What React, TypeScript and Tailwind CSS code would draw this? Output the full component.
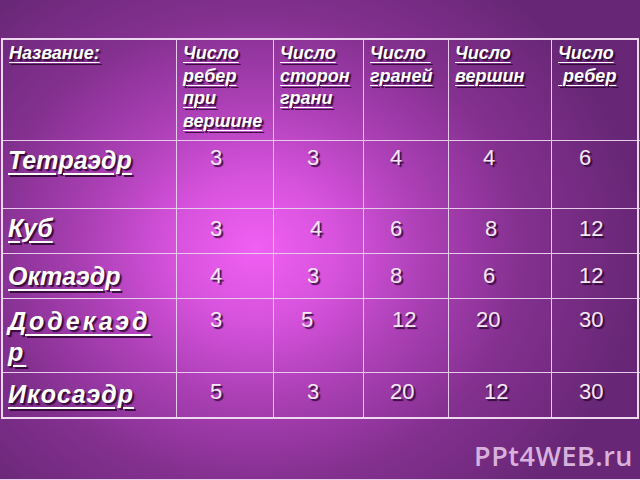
import React from "react";

const FONT = { fontFamily: '"Liberation Sans", Arial, sans-serif' };

const HEADERS: { lines: string[] }[] = [
  { lines: ["Название:"] },
  { lines: ["Число", "ребер", "при", "вершине"] },
  { lines: ["Число", "сторон", "грани"] },
  { lines: ["Число\u00a0", "граней"] },
  { lines: ["Число", "вершин"] },
  { lines: ["Число", "\u00a0ребер"] },
];

interface Row { name: React.ReactNode; nums: string[]; namePt: string; numPt: string; offs: string[]; }

const ROWS: Row[] = [
  { name: "Тетраэдр", nums: ["3", "3", "4", "4", "6"], namePt: "pt-[4px]", numPt: "pt-[4px]", offs: ["pl-[33px]", "pl-[33px]", "pl-[26px]", "pl-[34px]", "pl-[27px]"] },
  { name: "Куб", nums: ["3", "4", "6", "8", "12"], namePt: "pt-[4px]", numPt: "pt-[7px]", offs: ["pl-[33px]", "pl-[36px]", "pl-[26px]", "pl-[36px]", "pl-[27px]"] },
  { name: "Октаэдр", nums: ["4", "3", "8", "6", "12"], namePt: "pt-[7px]", numPt: "pt-[9px]", offs: ["pl-[33px]", "pl-[33px]", "pl-[26px]", "pl-[34px]", "pl-[27px]"] },
  { name: <span className="tracking-[3px]">Додекаэд<br />р</span>, nums: ["3", "5", "12", "20", "30"], namePt: "pt-[7px]", numPt: "pt-[8px]", offs: ["pl-[33px]", "pl-[27px]", "pl-[28px]", "pl-[27px]", "pl-[27px]"] },
  { name: <span className="tracking-[1px]">Икосаэдр</span>, nums: ["5", "3", "20", "12", "30"], namePt: "pt-[6px]", numPt: "pt-[6px]", offs: ["pl-[33px]", "pl-[33px]", "pl-[26px]", "pl-[35px]", "pl-[27px]"] },
];

const SHADOW = "[text-shadow:2px_2px_1px_rgba(40,5,45,0.85)]";

export default function App() {
  return (
    <div
      className="relative w-[640px] h-[480px] overflow-hidden bg-[radial-gradient(ellipse_60%_70%_at_40%_52%,#f060f3_0%,#d652dc_22%,#aa3fb4_45%,#83308f_70%,#682776_100%)] border-b border-[#e9cdee]"
      style={FONT}
    >
      <div className="pt-[38px] pl-px">
        <div className="grid w-[638px] grid-cols-[174px_97px_90px_85px_103px_89px] grid-rows-[101px_68px_45px_45px_74px_44px] border-2 border-[#eed8f0]">
          {HEADERS.map((h, i) => (
            <div
              key={i}
              className={`border-b border-[#e6cbea] ${i < 5 ? "border-r" : ""} pl-[6px] pt-[2px] text-white font-bold italic text-[18px] leading-[22.5px] ${SHADOW}`}
            >
              {h.lines.map((l, j) => (
                <div key={j}><span className="underline decoration-1 underline-offset-[3px]">{l}</span></div>
              ))}
            </div>
          ))}
          {ROWS.map((r, ri) => (
            <React.Fragment key={ri}>
              <div
                className={`border-r border-[#e6cbea] ${ri < 4 ? "border-b" : ""} pl-[5px] ${r.namePt} text-white font-bold italic text-[25px] leading-[31px] ${SHADOW}`}
              >
                <span className="underline decoration-2 underline-offset-[4px]">{r.name}</span>
              </div>
              {r.nums.map((n, ci) => (
                <div
                  key={ci}
                  className={`border-[#e6cbea] ${ci < 4 ? "border-r" : ""} ${ri < 4 ? "border-b" : ""} ${r.offs[ci]} ${r.numPt} text-[#f6e8f6] text-[22px] leading-[26px] ${SHADOW}`}
                >
                  {n}
                </div>
              ))}
            </React.Fragment>
          ))}
        </div>
      </div>
      <div
        className="absolute right-[7px] bottom-[3px] text-[27px] font-semibold text-[#d8b2dc] tracking-[0.5px]"
        style={{ fontFamily: '"Open Sans", "Liberation Sans", sans-serif' }}
      >
        PPt4WEB.ru
      </div>
    </div>
  );
}
